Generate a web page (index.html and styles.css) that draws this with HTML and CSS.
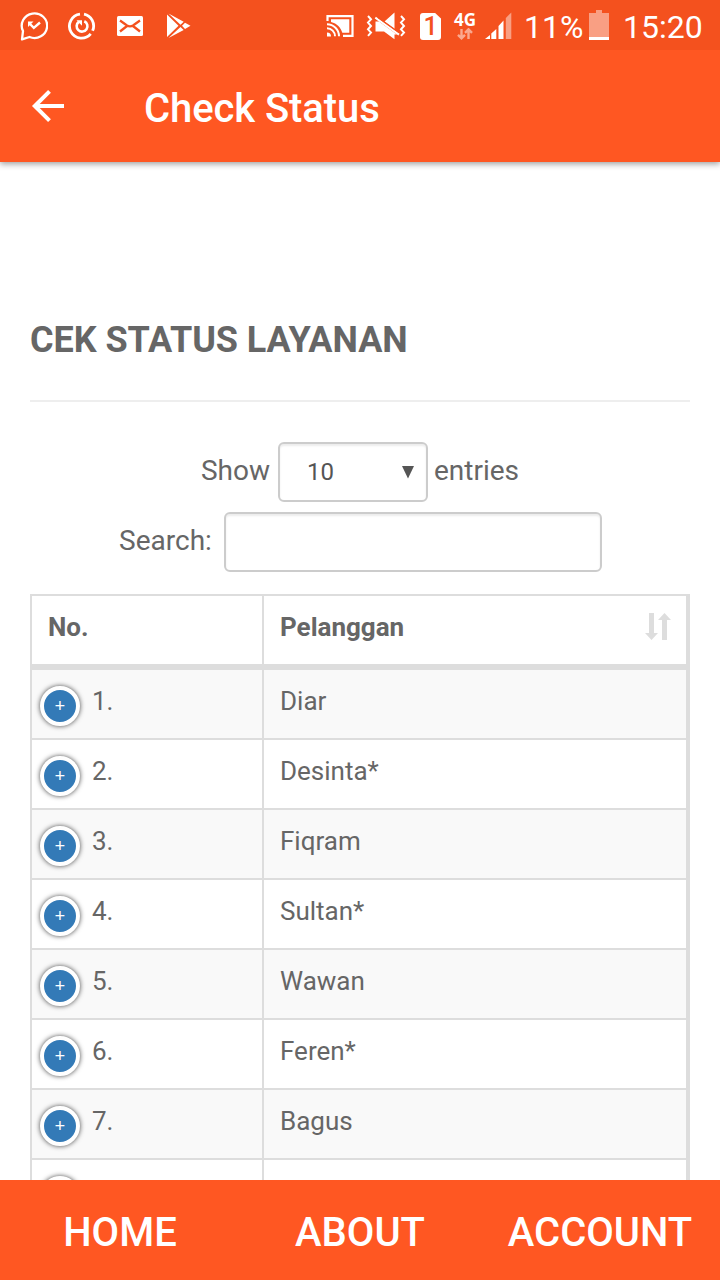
FILE: index.html
```html
<!DOCTYPE html>
<html lang="id">
<head>
<meta charset="utf-8">
<title>Check Status</title>
<link rel="stylesheet" href="styles.css">
</head>
<body>
<div class="screen">
  <header class="top">
    <div class="status">
      <div class="status-left">
        <svg width="28" height="30" viewBox="20 11 28 30" fill="none" stroke="#fff" stroke-width="2.3">
          <path d="M22 39.300l1-8.300A12.700 12.300 0 1 1 29.500 37z" stroke-linejoin="round"/>
          <path d="M29 23l4.800 4.800 6.200-5.300" stroke-width="2.400"/><path d="M28 21.500h5.500L28 27z" fill="#fff" stroke="none"/>
        </svg>
        <svg width="28" height="30" viewBox="68 11 28 30" fill="none" stroke="#fff" stroke-width="2.800">
          <path d="M80 14.200a12 12 0 1 0 10.700 19.600M84 14.200a12 12 0 0 1 8.600 16.600"/>
          <path d="M84.300 21.300a5.400 5.400 0 1 1-5.500.6" stroke-width="2.600"/><path d="M76.500 20.200H82v5.500z" fill="#fff" stroke="none"/>
        </svg>
        <svg width="28" height="30" viewBox="116 11 28 30">
          <rect x="117" y="16" width="26" height="20" rx="1.500" fill="#fff"/>
          <path d="M120 20.500l7 5q3 1.700 6 0l7-5M120 31.500l7-5.500M140 31.500l-7-5.500" fill="none" stroke="#f4511e" stroke-width="2.300"/>
        </svg>
        <svg width="28" height="30" viewBox="164 11 28 30" fill="#fff">
          <path d="M167 14.500v22.500l11.500-11.300zM168.500 13.600l12 11.200 3.200-3zM168.500 38l12-10.900 3.200 3zM182 25.800l3-3 5.500 3-5.500 3.200z"/>
        </svg>
      </div>
      <div class="status-right">
        <svg width="28" height="30" viewBox="326 11 28 30" fill="none" stroke="#fff">
          <path d="M327.500 21v-4.800h25v19.600H343" stroke-width="2.200"/>
          <path d="M331 19.300h18.300v13.500h-7c-1.300-5-5.300-9.300-11.300-10.800z" fill="#fff" stroke="none"/>
          <path d="M327 24.200a12 12 0 0 1 12 12M327 28.300a8 8 0 0 1 8 8" stroke-width="2"/><path d="M327 32.500v4h4a4 4 0 0 0-4-4z" fill="#fff" stroke="none"/>
        </svg>
        <svg class="mute" width="40" height="30" viewBox="366 11 40 30" fill="none" stroke="#fff">
          <path d="M368 16l3 3.300-3 3.300 3 3.400-3 3.300 3 3.300-3 3.300M401 16l3 3.300-3 3.300 3 3.400-3 3.300 3 3.300-3 3.300" stroke-width="2"/>
          <path d="M375.500 21.500h3.500L397 34.500h-2.500v4.800L384 31.500h-8.500zM394.500 12.500v16.500L384.500 21.500z" fill="#fff" stroke="none"/>
          <path d="M375.300 17.600L399 34.600" stroke-width="2"/><path d="M378 17.600l21 15" stroke="#f4511e" stroke-width="1.200"/>
        </svg>
        <div class="sim">1</div>
        <div class="network"><span class="gen">4G</span>
          <svg width="16" height="12" viewBox="458 28 16 12" fill="none" stroke="#fff" stroke-opacity=".5" stroke-width="2.400"><path d="M462.500 29v9M459 34.800l3.500 3.500 3.500-3.500M469.500 39v-9M466 32.800l3.500-3.500 3.500 3.500"/></svg>
        </div>
        <svg class="signal" width="28" height="28" viewBox="484 12 28 28" fill="#fff">
          <path d="M485 39l5-4v4zM491.300 33.500l5-4.500v10h-5zM498.500 26l5-5.500V39h-5z"/><path d="M505.800 18l5.500-5.500V39h-5.500z" opacity=".45"/>
        </svg>
        <span class="percent">11%</span>
        <svg class="battery" width="20" height="30" viewBox="589 10 20 30" fill="#fff"><path d="M589 13h7v-3h6v3h7v24h-20z" opacity=".45"/><path d="M589 37h20v3h-20z"/></svg>
        <span class="time">15:20</span>
      </div>
    </div>
    <div class="appbar">
      <svg class="back" width="34" height="34" viewBox="31 89 34 34" fill="none" stroke="#fff" stroke-width="4"><path d="M64 106H35M49.500 91.300L34.800 106l14.700 14.700"/></svg>
      <h1 class="title">Check Status</h1>
    </div>
  </header>

  <main class="content">
    <h2 class="heading">CEK STATUS LAYANAN</h2>
    <div class="controls">
      <label class="control"><span class="caption">Show</span>
        <span class="select">10<svg width="12" height="13" viewBox="0 0 12 13" fill="#555"><path d="M0 0h12L6 12.500z"/></svg></span>
        <span class="caption">entries</span></label>
      <label class="control search"><span class="caption">Search:</span><input class="input" type="text"></label>
    </div>
    <div class="table">
      <div class="row head">
        <div class="cell">No.</div>
        <div class="cell sortable">Pelanggan
          <svg class="sort" width="26" height="28" viewBox="0 0 26 28" fill="#ddd"><path d="M4 0h5v20h4l-6.500 7L0 20h4zM17 27V7h-4l6.500-7 6.500 7H22v20z"/></svg>
        </div>
      </div>
      <div class="row"><div class="cell num"><i class="plus">+</i>1.</div><div class="cell">Diar</div></div>
      <div class="row"><div class="cell num"><i class="plus">+</i>2.</div><div class="cell">Desinta*</div></div>
      <div class="row"><div class="cell num"><i class="plus">+</i>3.</div><div class="cell">Fiqram</div></div>
      <div class="row"><div class="cell num"><i class="plus">+</i>4.</div><div class="cell">Sultan*</div></div>
      <div class="row"><div class="cell num"><i class="plus">+</i>5.</div><div class="cell">Wawan</div></div>
      <div class="row"><div class="cell num"><i class="plus">+</i>6.</div><div class="cell">Feren*</div></div>
      <div class="row"><div class="cell num"><i class="plus">+</i>7.</div><div class="cell">Bagus</div></div>
      <div class="row"><div class="cell num"><i class="plus"></i></div><div class="cell"></div></div>
    </div>
  </main>

  <nav class="tabs">
    <a class="tab">HOME</a>
    <a class="tab">ABOUT</a>
    <a class="tab">ACCOUNT</a>
  </nav>
</div>
</body>
</html>
```
FILE: styles.css
```css
* { box-sizing: border-box; }
body { margin: 0; font-family: Roboto, sans-serif; color: #666; background: #fff; }
svg { display: block; flex: none; }
.screen { display: flex; flex-direction: column; width: 720px; height: 1280px; overflow: hidden; }

.top { flex: none; height: 162px; background: #ff5722; color: #fff; box-shadow: 0 2px 6px rgba(0, 0, 0, .38); z-index: 1; }
.status { display: flex; height: 50px; padding-left: 20px; background: #f4511e; }
.status-left { display: flex; align-items: flex-start; gap: 20px; padding-top: 11px; }
.status-right { display: flex; align-items: flex-start; margin-left: 134px; padding-top: 11px; }
.mute { margin-left: 12px; }
.sim { width: 21px; height: 27px; margin: 2px 0 0 14px; background: #fff; color: #f4511e; border-radius: 3px; clip-path: polygon(0 0, 72% 0, 100% 20%, 100% 100%, 0 100%); font: 500 25px/28px Roboto, sans-serif; text-align: center; }
.network { display: flex; flex-direction: column; align-items: center; width: 24px; margin-left: 12px; }
.gen { height: 17px; font: 700 17px/17px "Open Sans", sans-serif; }
.signal { margin: 1px 0 0 7px; }
.percent, .time { font-size: 32px; line-height: 33px; white-space: nowrap; }
.percent { width: 65px; margin-left: 12px; }
.battery { margin-top: -1px; }
.time { width: 78px; margin-left: 14px; }
.appbar { display: flex; align-items: flex-start; height: 112px; padding: 39px 31px 0; }
.title { margin: -4px 0 0 79px; font-size: 40px; font-weight: 500; line-height: 48px; letter-spacing: -.08px; }

.content { flex: 1; min-height: 0; overflow: hidden; padding: 155px 30px 0; }
.heading { height: 85px; margin: 0 0 40px; border-bottom: 2px solid #eee; font-size: 36px; font-weight: 700; line-height: 46px; letter-spacing: -.05px; }
.controls { display: flex; flex-direction: column; align-items: center; gap: 10px; }
.control { display: flex; align-items: center; height: 60px; font-size: 28px; line-height: 56px; }
.caption { padding-bottom: 2px; }
.select { display: flex; align-items: center; justify-content: space-between; width: 150px; height: 60px; margin: 0 6px 0 8px; padding: 0 12px 0 27px; border: 2px solid #ccc; border-radius: 6px; box-shadow: inset 0 2px 2px rgba(0, 0, 0, .075); color: #555; font-size: 24px; }
.search { gap: 12px; padding-left: 1px; }
.input { width: 378px; height: 60px; border: 2px solid #ccc; border-radius: 6px; box-shadow: inset 0 2px 2px rgba(0, 0, 0, .075); background: #fff; }

.table { margin-top: 22px; border: 2px solid #ddd; border-right-width: 4px; font-size: 26px; line-height: 30px; }
.row { display: grid; grid-template-columns: 232px 1fr; height: 70px; border-bottom: 2px solid #ddd; background: #fff; }
.row:nth-child(even) { background: #f9f9f9; }
.head { height: 74px; border-bottom-width: 6px; font-weight: 700; }
.cell { padding: 16px; }
.cell:first-child { border-right: 2px solid #ddd; }
.sortable { display: flex; justify-content: space-between; padding-right: 15px; }
.sort { margin-top: 1px; }
.num { display: flex; padding: 16px 8px; }
.plus { flex: none; width: 40px; height: 40px; margin-right: 12px; border: 4px solid #fff; border-radius: 50%; background: #337ab7; box-shadow: 0 0 5px #444; color: #fff; font: normal 300 18px/34px "Liberation Mono", monospace; text-align: center; }

.tabs { flex: none; display: grid; grid-template-columns: repeat(3, 240px); height: 100px; background: #ff5722; color: #fff; }
.tab { font-size: 40px; font-weight: 500; line-height: 106px; text-align: center; }
```
